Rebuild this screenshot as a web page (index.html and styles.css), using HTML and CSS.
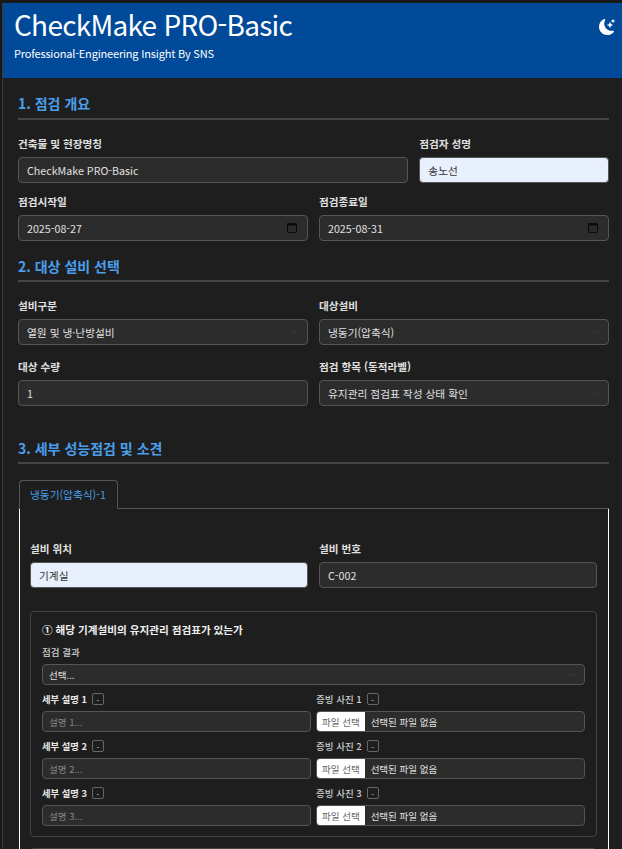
FILE: index.html
```html
<!DOCTYPE html>
<html lang="ko">
<head>
  <meta charset="UTF-8">
  <meta name="viewport" content="width=device-width, initial-scale=1.0">
  <title>CheckMake PRO-Basic</title>
  <link rel="stylesheet" href="styles.css">
</head>
<body>
  <div class="container">
    <header class="top-header">
      <div>
        <h1>CheckMake PRO-Basic</h1>
        <p>Professional-Engineering Insight By SNS</p>
      </div>
      <button type="button" class="theme-btn" aria-label="테마 변경">
        <svg width="16" height="16" viewBox="0 0 16 16" fill="currentColor">
          <path d="M6 .278a.77.77 0 0 1 .08.858 7.2 7.2 0 0 0-.878 3.46c0 4.021 3.278 7.277 7.318 7.277q.792-.001 1.533-.16a.79.79 0 0 1 .81.316.73.73 0 0 1-.031.893A8.35 8.35 0 0 1 8.344 16C3.734 16 0 12.286 0 7.71 0 4.266 2.114 1.312 5.124.06A.75.75 0 0 1 6 .278"/>
          <path d="M10.794 3.148a.217.217 0 0 1 .412 0l.387 1.162c.173.518.579.924 1.097 1.097l1.162.387a.217.217 0 0 1 0 .412l-1.162.387a1.73 1.73 0 0 0-1.097 1.097l-.387 1.162a.217.217 0 0 1-.412 0l-.387-1.162A1.73 1.73 0 0 0 9.31 6.593l-1.162-.387a.217.217 0 0 1 0-.412l1.162-.387a1.73 1.73 0 0 0 1.097-1.097zM13.863.099a.145.145 0 0 1 .274 0l.258.774c.115.346.386.617.732.732l.774.258a.145.145 0 0 1 0 .274l-.774.258a1.16 1.16 0 0 0-.732.732l-.258.774a.145.145 0 0 1-.274 0l-.258-.774a1.16 1.16 0 0 0-.732-.732l-.774-.258a.145.145 0 0 1 0-.274l.774-.258c.346-.115.617-.386.732-.732z"/>
        </svg>
      </button>
    </header>

    <main class="content">
      <h2 class="section-title first">1. 점검 개요</h2>
      <div class="grid">
        <div class="col-8">
          <label>건축물 및 현장명칭</label>
          <input class="control" type="text" value="CheckMake PRO-Basic">
        </div>
        <div class="col-4">
          <label>점검자 성명</label>
          <input class="control filled" type="text" value="송노선">
        </div>
        <div class="col-6">
          <label>점검시작일</label>
          <div class="control date-field">
            <span>2025-08-27</span>
            <svg width="10" height="10" viewBox="0 0 10 10"><rect x="0.5" y="0.5" width="9" height="9" rx="1" fill="#2a2a2a" stroke="#0a0a0a"/><rect x="0" y="0.5" width="10" height="2" fill="#0a0a0a"/></svg>
          </div>
        </div>
        <div class="col-6">
          <label>점검종료일</label>
          <div class="control date-field">
            <span>2025-08-31</span>
            <svg width="10" height="10" viewBox="0 0 10 10"><rect x="0.5" y="0.5" width="9" height="9" rx="1" fill="#2a2a2a" stroke="#0a0a0a"/><rect x="0" y="0.5" width="10" height="2" fill="#0a0a0a"/></svg>
          </div>
        </div>
      </div>

      <h2 class="section-title second">2. 대상 설비 선택</h2>
      <div class="grid grid-wide">
        <div class="col-6">
          <label>설비구분</label>
          <select class="control select"><option>열원 및 냉·난방설비</option></select>
        </div>
        <div class="col-6">
          <label>대상설비</label>
          <select class="control select"><option>냉동기(압축식)</option></select>
        </div>
        <div class="col-6">
          <label>대상 수량</label>
          <input class="control" type="text" value="1">
        </div>
        <div class="col-6">
          <label>점검 항목 (동적라벨)</label>
          <select class="control select"><option>유지관리 점검표 작성 상태 확인</option></select>
        </div>
      </div>

      <h2 class="section-title third">3. 세부 성능점검 및 소견</h2>
      <div class="tabs">
        <div class="tab active">냉동기(압축식)-1</div>
      </div>
      <div class="tab-pane">
        <div class="grid two">
          <div>
            <label>설비 위치</label>
            <input class="control filled" type="text" value="기계실">
          </div>
          <div>
            <label>설비 번호</label>
            <input class="control" type="text" value="C-002">
          </div>
        </div>

        <section class="check-card">
          <h3>① 해당 기계설비의 유지관리 점검표가 있는가</h3>
          <label class="small">점검 결과</label>
          <select class="control control-sm select"><option>선택...</option></select>

          <div class="detail-grid">
            <div>
              <div class="detail-head"><label class="small strong">세부 설명 1</label><button type="button" class="mini-btn">-</button></div>
              <input class="control control-sm" type="text" placeholder="설명 1...">
            </div>
            <div>
              <div class="detail-head"><label class="small">증빙 사진 1</label><button type="button" class="mini-btn">-</button></div>
              <div class="control control-sm file-field"><span class="file-btn">파일 선택</span><span>선택된 파일 없음</span></div>
            </div>
            <div>
              <div class="detail-head"><label class="small strong">세부 설명 2</label><button type="button" class="mini-btn">-</button></div>
              <input class="control control-sm" type="text" placeholder="설명 2...">
            </div>
            <div>
              <div class="detail-head"><label class="small">증빙 사진 2</label><button type="button" class="mini-btn">-</button></div>
              <div class="control control-sm file-field"><span class="file-btn">파일 선택</span><span>선택된 파일 없음</span></div>
            </div>
            <div>
              <div class="detail-head"><label class="small strong">세부 설명 3</label><button type="button" class="mini-btn">-</button></div>
              <input class="control control-sm" type="text" placeholder="설명 3...">
            </div>
            <div>
              <div class="detail-head"><label class="small">증빙 사진 3</label><button type="button" class="mini-btn">-</button></div>
              <div class="control control-sm file-field"><span class="file-btn">파일 선택</span><span>선택된 파일 없음</span></div>
            </div>
          </div>
        </section>

        <section class="check-card next"></section>
      </div>
    </main>
  </div>
</body>
</html>
```

FILE: styles.css
```css
* {
  box-sizing: border-box;
}

html, body {
  height: 100%;
  overflow: hidden;
}

body {
  margin: 0;
  padding: 3px 0 0 2px;
  background-color: #181818;
  color: #e0e0e0;
  font-family: "Noto Sans CJK KR", "Noto Sans", sans-serif;
  font-size: 11px;
}

.container {
  background-color: #1e1e1e;
  border-left: 1px solid #3a3a3a;
  min-height: 100%;
}

.top-header {
  display: flex;
  justify-content: space-between;
  height: 75px;
  padding: 3px 7px 0 11px;
  background-color: #004a99;
  color: #fff;
}

.top-header h1 {
  margin: 0;
  font-size: 28px;
  font-weight: 400;
  letter-spacing: -0.74px;
  line-height: 36px;
}

.top-header p {
  margin: 3px 0 0;
  font-size: 11px;
  letter-spacing: -0.18px;
  line-height: 16px;
}

.theme-btn {
  height: 16px;
  margin-top: 13px;
  padding: 0;
  border: none;
  background: none;
  color: #fff;
}

.content {
  padding: 0 13px 0 15px;
}

.section-title {
  margin: 0 0 16px;
  padding-bottom: 4px;
  border-bottom: 2px solid #444;
  color: #4a9eea;
  font-size: 14px;
  font-weight: 700;
  line-height: 20px;
}

.section-title.first {
  padding-top: 15px;
  padding-bottom: 5px;
}

.section-title.second {
  margin-top: 15px;
}

.section-title.third {
  margin-top: 32px;
}

.grid {
  display: grid;
  grid-template-columns: repeat(12, 1fr);
  gap: 11px 11px;
}

.grid-wide {
  row-gap: 14px;
}

.col-8 { grid-column: span 8; }
.col-6 { grid-column: span 6; }
.col-4 { grid-column: span 4; }

.grid.two {
  grid-template-columns: 1fr 1fr;
}

label {
  display: block;
  margin-bottom: 5px;
  color: #e0e0e0;
  font-size: 10.6px;
  font-weight: 700;
  line-height: 16px;
}

.control {
  display: block;
  width: 100%;
  height: 26px;
  padding: 0 8px;
  border: 1px solid #555;
  border-radius: 4px;
  background-color: #2c2c2c;
  color: #e0e0e0;
  font-family: inherit;
  font-size: 10.7px;
}

.control.filled {
  background-color: #e8f0fe;
  color: #333;
}

.date-field {
  display: flex;
  align-items: center;
  justify-content: space-between;
  padding-right: 10px;
}

.select {
  appearance: none;
  background-image: url("data:image/svg+xml,%3csvg xmlns='http://www.w3.org/2000/svg' viewBox='0 0 16 16'%3e%3cpath fill='none' stroke='%233c3c3c' stroke-linecap='round' stroke-linejoin='round' stroke-width='2' d='m2 5 6 6 6-6'/%3e%3c/svg%3e");
  background-repeat: no-repeat;
  background-position: right 8px center;
  background-size: 10px 8px;
}

.tabs {
  display: flex;
  margin-top: 16px;
  padding-left: 1px;
  border-bottom: 1px solid #555;
}

.tab {
  height: 29px;
  margin-bottom: -1px;
  padding: 0 11px 0 10px;
  border: 1px solid #555;
  border-bottom-color: #1e1e1e;
  border-radius: 4px 4px 0 0;
  background-color: #1e1e1e;
  color: #4a9eea;
  font-size: 10.7px;
  line-height: 28px;
}

.tab-pane {
  margin-left: 1px;
  padding: 32px 11px 0 10px;
  border-left: 1px solid #fff;
  border-right: 1px solid #fff;
  min-height: 400px;
}

.check-card {
  margin-top: 23px;
  padding: 10px 11px;
  border: 1px solid #444;
  border-radius: 4px;
  height: 226px;
}

.check-card.next {
  margin-top: 11px;
}

.check-card h3 {
  margin: 0 0 7px;
  color: #f0f0f0;
  font-size: 10.6px;
  font-weight: 700;
  line-height: 16px;
}

label.small {
  margin-bottom: 5px;
  font-size: 9.5px;
  font-weight: 500;
  color: #d0d0d0;
  line-height: 14px;
}

label.small.strong {
  font-size: 9.3px;
  font-weight: 700;
  color: #e8e8e8;
}

.control-sm {
  height: 21px;
  padding: 0 6px;
  font-size: 9.5px;
}

.control-sm::placeholder {
  color: #888;
}

.detail-grid {
  display: grid;
  grid-template-columns: 1fr 1fr;
  gap: 6px 5px;
  margin-top: 6px;
}

.detail-head {
  display: flex;
  align-items: center;
  gap: 5px;
  height: 16px;
  margin-bottom: 4px;
}

.detail-head label {
  margin: 0;
}

.mini-btn {
  width: 12px;
  height: 12px;
  padding: 0;
  border: 1px solid #666;
  border-radius: 2px;
  background: none;
  color: #ccc;
  font-size: 8px;
  line-height: 9px;
}

.file-field {
  display: flex;
  align-items: center;
  gap: 6px;
  padding: 0;
  overflow: hidden;
}

.file-btn {
  display: flex;
  align-items: center;
  height: 100%;
  padding: 0 5px;
  background-color: #fff;
  color: #666;
}
```
